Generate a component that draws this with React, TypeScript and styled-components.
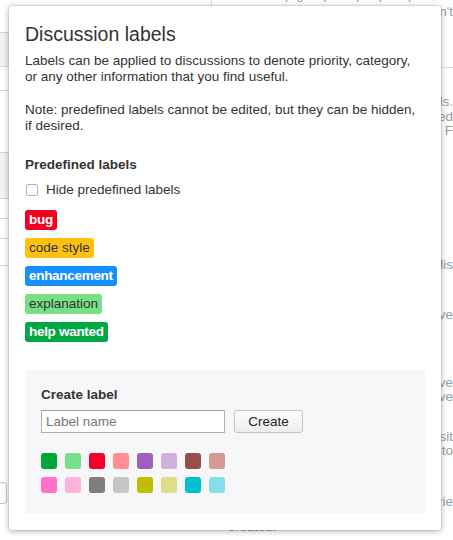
import React from "react";
import styled, { createGlobalStyle } from "styled-components";

const GlobalStyle = createGlobalStyle`
  body {
    margin: 0;
    background: #fff;
    font-family: "Liberation Sans", Arial, sans-serif;
    overflow: hidden;
  }
`;

// page behind the popup
const Page = styled.div`
  position: relative;
  display: flex;
  width: 453px;
  height: 540px;
  overflow: hidden;
`;

const Sidebar = styled.div`
  width: 212px;
  flex-shrink: 0;
`;

const SidebarNav = styled.div`
  border-right: 1px solid #dcdcdc;
`;

const SidebarRow = styled.div<{ $h: number; $shade?: boolean }>`
  height: ${(p) => p.$h}px;
  border-bottom: 1px solid #d6d6d6;
  background: ${(p) => (p.$shade ? "#f2f2f2" : "#fff")};
`;

const SidebarButton = styled.div`
  margin: 216px 0 0 -20px;
  width: 25px;
  height: 20px;
  border: 1px solid #c4c4c4;
  border-radius: 3px;
`;

const Main = styled.div`
  flex: 1;
  min-width: 0;
  margin-top: -12px;
  padding-left: 16px;
  color: #9b9b9b;
  font-size: 13.5px;
  line-height: 14.5px;
`;

const MainText = styled.p<{ $top: number; $left?: boolean }>`
  margin: ${(p) => p.$top}px 0 0;
  white-space: nowrap;
  text-align: ${(p) => (p.$left ? "left" : "right")};
`;

const MainRule = styled.hr`
  margin: 48px 0 0 -16px;
  border: none;
  border-top: 1px solid #dcdcdc;
`;

// popup
const Popup = styled.div`
  position: absolute;
  left: 9px;
  top: 6px;
  width: 432px;
  box-sizing: border-box;
  padding: 16px;
  background: #fff;
  border-radius: 3px;
  box-shadow: 0 1px 6px rgba(0, 0, 0, 0.32), 0 0 0 1px rgba(0, 0, 0, 0.05);
  color: #333;
  font-size: 13.5px;
  line-height: 16px;
`;

const Title = styled.h2`
  margin: 0;
  font-size: 19.5px;
  line-height: 24px;
  font-weight: normal;
  color: #333;
`;

const Text = styled.p<{ $top: number }>`
  margin: ${(p) => p.$top}px 0 0;
`;

const SectionHeading = styled.h3<{ $top: number }>`
  margin: ${(p) => p.$top}px 0 0;
  font-size: 13.5px;
  line-height: 16px;
  font-weight: bold;
  color: #333;
`;

const CheckRow = styled.label`
  display: flex;
  align-items: center;
  gap: 8px;
  height: 16px;
  margin-top: 9px;
  padding-left: 1px;
`;

const CheckBox = styled.span`
  width: 10px;
  height: 10px;
  border: 1px solid #b3b3b3;
  border-radius: 2px;
  background: #fff;
`;

const LabelList = styled.div`
  display: flex;
  flex-direction: column;
  align-items: flex-start;
  gap: 8px;
  margin-top: 12px;
`;

const Badge = styled.span<{ $bg: string; $light?: boolean }>`
  height: 20px;
  line-height: 20px;
  padding: 0 4px;
  border-radius: 3px;
  background: ${(p) => p.$bg};
  color: ${(p) => (p.$light ? "#fff" : "#333")};
  font-weight: ${(p) => (p.$light ? "bold" : "normal")};
  letter-spacing: ${(p) => (p.$light ? "-0.3px" : "0")};
`;

const CreatePanel = styled.div`
  margin-top: 28px;
  padding: 17px 16px 21px;
  background: #f7f7f9;
`;

const FormRow = styled.div`
  display: flex;
  gap: 9px;
  margin-top: 7px;
`;

const NameInput = styled.input`
  width: 184px;
  height: 23px;
  box-sizing: border-box;
  padding: 0 4px;
  border: 1px solid #b0b0b0;
  border-top-color: #a0a0a0;
  background: #fff;
  font-family: inherit;
  font-size: 13.5px;
  color: #333;
  outline: none;
  &::placeholder {
    color: #777;
  }
`;

const CreateButton = styled.button`
  width: 69px;
  height: 23px;
  padding: 0;
  border: 1px solid #c6c6c6;
  border-radius: 3px;
  background: linear-gradient(#fdfdfd, #ededed);
  font-family: inherit;
  font-size: 13.5px;
  color: #222;
`;

const Swatches = styled.div`
  display: grid;
  grid-template-columns: repeat(8, 16px);
  gap: 8px;
  margin-top: 20px;
`;

const Swatch = styled.span<{ $color: string }>`
  width: 16px;
  height: 16px;
  border-radius: 3px;
  background: ${(p) => p.$color};
`;

const labels = [
  { name: "bug", bg: "#f3001e", light: true },
  { name: "code style", bg: "#fec10d", light: false },
  { name: "enhancement", bg: "#1790fb", light: true },
  { name: "explanation", bg: "#77df85", light: false },
  { name: "help wanted", bg: "#00a845", light: true },
];

const colors = [
  "#00a63a", "#79e08a", "#f2002a", "#ff8e95", "#9f60bd", "#cfb0d9", "#955147", "#d39b94",
  "#ff70c8", "#ffb2da", "#7e7e7e", "#c6c6c6", "#bfbf00", "#dddd8a", "#00bfd0", "#84dfe8",
];

const App: React.FC = () => {
  return (
    <>
      <GlobalStyle />
      <Page>
        <Sidebar>
          <SidebarNav>
            <SidebarRow $h={32} />
            <SidebarRow $h={33} $shade />
            <SidebarRow $h={23} />
            <SidebarRow $h={61} />
            <SidebarRow $h={45} $shade />
            <SidebarRow $h={19} />
            <SidebarRow $h={19} />
            <SidebarRow $h={26} />
          </SidebarNav>
          <SidebarButton />
        </Sidebar>
        <Main>
          <MainText $top={0}>Keep groups of people apart, so</MainText>
          <MainText $top={2}>so you don't</MainText>
          <MainRule />
          <MainText $top={27}>based on your team's needs.</MainText>
          <MainText $top={0}>can be renamed or removed</MainText>
          <MainText $top={0}>from the settings page. F</MainText>
          <MainText $top={119}>discussions in the lis</MainText>
          <MainText $top={36}>people who were approve</MainText>
          <MainText $top={53}>are archived will be move</MainText>
          <MainText $top={0}>and kept in the archive</MainText>
          <MainText $top={25}>sent by email for all to visit</MainText>
          <MainText $top={0}>in one thread to</MainText>
          <MainText $top={36}>own colour for the serie</MainText>
          <MainText $top={11} $left>created.</MainText>
        </Main>

        <Popup>
          <Title>Discussion labels</Title>
          <Text $top={7}>
            Labels can be applied to discussions to denote priority, category,
            or any other information that you find useful.
          </Text>
          <Text $top={17}>
            Note: predefined labels cannot be edited, but they can be hidden,
            if desired.
          </Text>

          <SectionHeading $top={23}>Predefined labels</SectionHeading>
          <CheckRow>
            <CheckBox />
            Hide predefined labels
          </CheckRow>

          <LabelList>
            {labels.map((l) => (
              <Badge key={l.name} $bg={l.bg} $light={l.light}>
                {l.name}
              </Badge>
            ))}
          </LabelList>

          <CreatePanel>
            <SectionHeading $top={0}>Create label</SectionHeading>
            <FormRow>
              <NameInput placeholder="Label name" />
              <CreateButton>Create</CreateButton>
            </FormRow>
            <Swatches>
              {colors.map((c) => (
                <Swatch key={c} $color={c} />
              ))}
            </Swatches>
          </CreatePanel>
        </Popup>
      </Page>
    </>
  );
};

export default App;
